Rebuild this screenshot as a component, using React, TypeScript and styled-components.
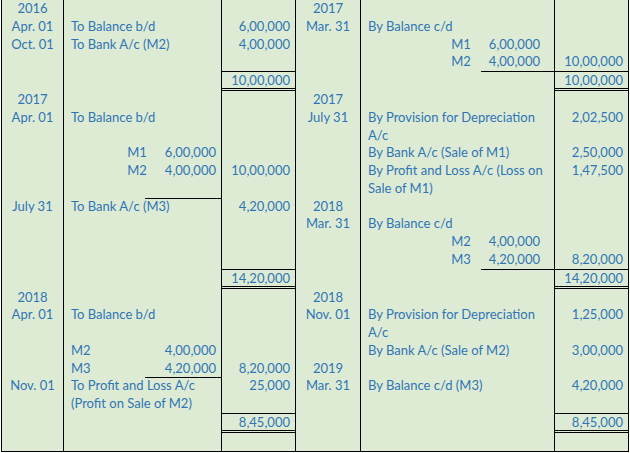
import React from 'react';
import styled, { createGlobalStyle } from 'styled-components';

const Global = createGlobalStyle`
  body {
    margin: 0;
    background: #fff;
    font-family: Lato, "Liberation Sans", sans-serif;
  }
`;

interface Sub {
  label: string;
  value: string;
  underline?: boolean;
  leftLabel?: boolean;
}

type Part = string | Sub | undefined;

interface Side {
  date?: string;
  part?: Part;
  amt?: string;
}

interface Row {
  l?: Side;
  r?: Side;
  total?: boolean;
}

const Ledger = styled.div`
  margin-left: 1px;
  width: 626px;
  border: 1.5px solid #000;
  border-top: none;
  background: #deebd4;
  color: #2f75b5;
  font-size: 13px;
  display: flex;
  flex-direction: column;
`;

const Line = styled.div<{ $total?: boolean }>`
  display: grid;
  grid-template-columns: 62px 158px 74px 65px 194px 1fr;
  height: ${({ $total }) => ($total ? '20px' : '17.75px')};
`;

const DateCell = styled.div`
  text-align: center;
  line-height: 16px;
  border-right: 1.5px solid #000;
  white-space: nowrap;
`;

const PartCell = styled.div`
  padding-left: 7px;
  line-height: 16px;
  border-right: 1.5px solid #000;
  white-space: nowrap;
  position: relative;
`;

const AmtCell = styled.div<{ $total?: boolean; $last?: boolean }>`
  text-align: right;
  padding-right: 5px;
  line-height: 16px;
  border-right: ${({ $last }) => ($last ? 'none' : '1.5px solid #000')};
  ${({ $total }) =>
    $total &&
    `border-top: 1.5px solid #000;
     border-bottom: 3px double #000;`}
`;

const SubLine = styled.div<{ $leftLabel?: boolean; $right?: boolean }>`
  display: flex;
  justify-content: ${({ $leftLabel }) => ($leftLabel ? 'space-between' : 'flex-end')};
  padding-right: ${({ $right }) => ($right ? '14px' : '5px')};
`;

const SubLabel = styled.span<{ $leftLabel?: boolean }>`
  margin-right: ${({ $leftLabel }) => ($leftLabel ? '0' : '18px')};
`;

const Rule = styled.div<{ $right?: boolean }>`
  position: absolute;
  right: 0;
  bottom: -1px;
  width: ${({ $right }) => ($right ? '73px' : '76px')};
  border-bottom: 1.5px solid #000;
`;

const rows: Row[] = [
  { l: { date: '2016' }, r: { date: '2017' } },
  { l: { date: 'Apr. 01', part: 'To Balance b/d', amt: '6,00,000' }, r: { date: 'Mar. 31', part: 'By Balance c/d' } },
  { l: { date: 'Oct. 01', part: 'To Bank A/c (M2)', amt: '4,00,000' }, r: { part: { label: 'M1', value: '6,00,000' } } },
  { r: { part: { label: 'M2', value: '4,00,000', underline: true }, amt: '10,00,000' } },
  { total: true, l: { amt: '10,00,000' }, r: { amt: '10,00,000' } },
  { l: { date: '2017' }, r: { date: '2017' } },
  { l: { date: 'Apr. 01', part: 'To Balance b/d' }, r: { date: 'July 31', part: 'By Provision for Depreciation', amt: '2,02,500' } },
  { r: { part: 'A/c' } },
  { l: { part: { label: 'M1', value: '6,00,000' } }, r: { part: 'By Bank A/c (Sale of M1)', amt: '2,50,000' } },
  { l: { part: { label: 'M2', value: '4,00,000' }, amt: '10,00,000' }, r: { part: 'By Profit and Loss A/c (Loss on', amt: '1,47,500' } },
  { l: { part: { label: '', value: '', underline: true } }, r: { part: 'Sale of M1)' } },
  { l: { date: 'July 31', part: 'To Bank A/c (M3)', amt: '4,20,000' }, r: { date: '2018' } },
  { r: { date: 'Mar. 31', part: 'By Balance c/d' } },
  { r: { part: { label: 'M2', value: '4,00,000' } } },
  { r: { part: { label: 'M3', value: '4,20,000', underline: true }, amt: '8,20,000' } },
  { total: true, l: { amt: '14,20,000' }, r: { amt: '14,20,000' } },
  { l: { date: '2018' }, r: { date: '2018' } },
  { l: { date: 'Apr. 01', part: 'To Balance b/d' }, r: { date: 'Nov. 01', part: 'By Provision for Depreciation', amt: '1,25,000' } },
  { r: { part: 'A/c' } },
  { l: { part: { label: 'M2', value: '4,00,000', leftLabel: true } }, r: { part: 'By Bank A/c (Sale of M2)', amt: '3,00,000' } },
  { l: { part: { label: 'M3', value: '4,20,000', leftLabel: true, underline: true }, amt: '8,20,000' }, r: { date: '2019' } },
  { l: { date: 'Nov. 01', part: 'To Profit and Loss A/c', amt: '25,000' }, r: { date: 'Mar. 31', part: 'By Balance c/d (M3)', amt: '4,20,000' } },
  { l: { part: '(Profit on Sale of M2)' } },
  { total: true, l: { amt: '8,45,000' }, r: { amt: '8,45,000' } },
  {},
];

const PartContent: React.FC<{ part: Part; right?: boolean }> = ({ part, right }) => {
  if (!part) return null;
  if (typeof part === 'string') return <>{part}</>;
  return (
    <>
      {part.value && (
        <SubLine $leftLabel={part.leftLabel} $right={right}>
          <SubLabel $leftLabel={part.leftLabel}>{part.label}</SubLabel>
          <span>{part.value}</span>
        </SubLine>
      )}
      {part.underline && <Rule $right={right} />}
    </>
  );
};

const App: React.FC = () => (
  <>
    <Global />
    <Ledger>
      {rows.map((row, i) => (
        <Line key={i} $total={row.total}>
          <DateCell>{row.l?.date}</DateCell>
          <PartCell>
            <PartContent part={row.l?.part} />
          </PartCell>
          <AmtCell $total={row.total}>{row.l?.amt}</AmtCell>
          <DateCell>{row.r?.date}</DateCell>
          <PartCell>
            <PartContent part={row.r?.part} right />
          </PartCell>
          <AmtCell $total={row.total} $last>
            {row.r?.amt}
          </AmtCell>
        </Line>
      ))}
    </Ledger>
  </>
);

export default App;
